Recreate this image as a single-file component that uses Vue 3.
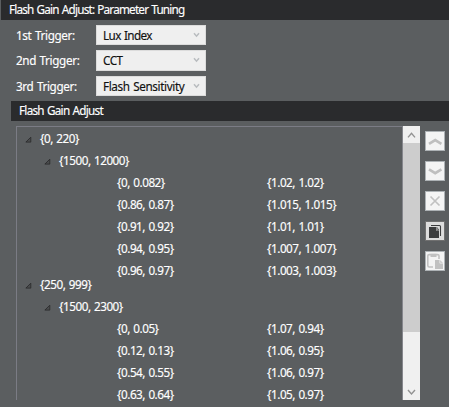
<script setup>
const triggers = [
  { label: '1st Trigger:', value: 'Lux Index', cls: 'lux' },
  { label: '2nd Trigger:', value: 'CCT', cls: 'cct' },
  { label: '3rd Trigger:', value: 'Flash Sensitivity', cls: 'sens' },
]
const groups = [
  {
    range: '{0, 220}',
    sub: '{1500, 12000}',
    rows: [
      ['{0, 0.082}', '{1.02, 1.02}'],
      ['{0.86, 0.87}', '{1.015, 1.015}'],
      ['{0.91, 0.92}', '{1.01, 1.01}'],
      ['{0.94, 0.95}', '{1.007, 1.007}'],
      ['{0.96, 0.97}', '{1.003, 1.003}'],
    ],
  },
  {
    range: '{250, 999}',
    sub: '{1500, 2300}',
    rows: [
      ['{0, 0.05}', '{1.07, 0.94}'],
      ['{0.12, 0.13}', '{1.06, 0.95}'],
      ['{0.54, 0.55}', '{1.06, 0.97}'],
      ['{0.63, 0.64}', '{1.05, 0.97}'],
    ],
  },
]
</script>

<template>
  <div class="panel">
    <header class="bar title">Flash Gain Adjust: Parameter Tuning</header>
    <div class="triggers">
      <div v-for="t in triggers" :key="t.label" class="trigger">
        <label>{{ t.label }}</label>
        <div class="combo">
          <span :class="t.cls">{{ t.value }}</span>
          <svg width="7" height="6" viewBox="0 0 7 6"><path d="M1 1.2 3.5 4.2 6 1.2" fill="none" stroke="#b9bcbf" stroke-width="1.5" /></svg>
        </div>
      </div>
    </div>
    <header class="bar subtitle">Flash Gain Adjust</header>
    <div class="body">
      <div class="tree">
        <div class="nodes">
          <div v-for="g in groups" :key="g.range" class="group">
            <div class="row top">
              <svg class="tri" width="7" height="7" viewBox="0 0 7 7"><path d="M.9 6.1H5.8V1.2Z" fill="#4a4c4e" stroke="#2c2d2e" stroke-width=".9" /></svg>
              <span>{{ g.range }}</span>
            </div>
            <div class="row sub">
              <svg class="tri" width="7" height="7" viewBox="0 0 7 7"><path d="M.9 6.1H5.8V1.2Z" fill="#4a4c4e" stroke="#2c2d2e" stroke-width=".9" /></svg>
              <span>{{ g.sub }}</span>
            </div>
            <div v-for="r in g.rows" :key="r[0]" class="row leaf">
              <span>{{ r[0] }}</span><span>{{ r[1] }}</span>
            </div>
          </div>
        </div>
        <div class="scroll">
          <div class="arrow"><svg width="9" height="8" viewBox="0 0 9 8"><path d="M1 6.4 4.5 2.4 8 6.4" fill="none" stroke="#929292" stroke-width="1.4" /></svg></div>
          <div class="thumb"></div>
          <div class="arrow end"><svg width="9" height="8" viewBox="0 0 9 8"><path d="M1 2 4.5 6 8 2" fill="none" stroke="#929292" stroke-width="1.4" /></svg></div>
        </div>
      </div>
      <div class="tools">
        <button><svg viewBox="0 0 18 18"><path d="M3 11.8 9.2 8l6.2 3.8" fill="none" stroke="#bfbfbf" stroke-width="2.7" /></svg></button>
        <button><svg viewBox="0 0 18 18"><path d="M3 7.4 9.2 11.2l6.2-3.8" fill="none" stroke="#bfbfbf" stroke-width="2.7" /></svg></button>
        <button><svg viewBox="0 0 18 18"><path d="M4.5 4.5l9 9M13.5 4.5l-9 9" fill="none" stroke="#c1c1c1" stroke-width="1.7" /></svg></button>
        <button class="active">
          <svg viewBox="0 0 18 18">
            <path d="M3 5h7v3.5h3V16H3z" fill="#3c3d3e" />
            <path d="M5 3.5h8.5q1 0 1 1V14" fill="none" stroke="#3c3d3e" stroke-width="1.1" />
            <path d="M10.8 5.3V7.9H12.8Z" fill="#eee" stroke="#3c3d3e" stroke-width=".7" />
          </svg>
        </button>
        <button>
          <svg viewBox="0 0 18 18">
            <path d="M7 15H3.3Q1.8 15 1.8 13.5V3.8Q1.8 2.6 3.3 2.6H11.5Q13 2.6 13 3.8V7" fill="none" stroke="#c1c1c1" stroke-width="1.6" />
            <path d="M4.5 1.8h6v3.2h-6z" fill="#c1c1c1" />
            <path d="M9 8h5l3 3v6H9z" fill="#c1c1c1" />
            <path d="M13.8 8v3.2H17" fill="none" stroke="#f4f4f4" stroke-width=".7" />
          </svg>
        </button>
      </div>
    </div>
  </div>
</template>

<style>
body { background: #5b5e60; overflow: hidden; }
</style>

<style scoped>
.panel {
  width: 449px;
  height: 407px;
  box-sizing: border-box;
  overflow: hidden;
  background: #5b5e60;
  color: #fff;
  font: 11.7px/20px "Noto Sans", "Open Sans", sans-serif;
  -webkit-text-stroke: 0.15px currentColor;
  word-spacing: 0.8px;
  white-space: nowrap;
}
.bar { height: 20px; background: #2a2b2d; line-height: 18px; }
.title { margin-left: 1px; padding-left: 8px; letter-spacing: -0.78px; }
.triggers {
  box-sizing: border-box;
  display: grid;
  gap: 5px;
  padding: 5px 0 0 16px;
  height: 81px;
  grid-template-rows: 20px 21px 20px;
}
.trigger { display: flex; }
.trigger label { width: 80px; letter-spacing: -0.35px; line-height: 20px; }
.combo {
  box-sizing: border-box;
  width: 110px;
  display: flex;
  justify-content: space-between;
  padding: 0 5px 0 6px;
  background: #efefef;
  border: 1px solid #dcdcdc;
  color: #111;
  line-height: 18px;
}
.combo svg { margin-top: 6px; }
.lux { letter-spacing: -0.6px; }
.cct { letter-spacing: -0.5px; }
.sens { letter-spacing: -0.36px; }
.subtitle { margin-left: 11px; padding-left: 8px; letter-spacing: -0.72px; }
.body { display: flex; padding: 5px 0 0 16px; }
.tree {
  box-sizing: border-box;
  display: flex;
  width: 404px;
  height: 274px;
  border-left: 1px solid #7b7c85;
}
.nodes {
  flex: 1;
  box-sizing: border-box;
  padding-top: 1px;
  border-top: 1px solid #7b7c85;
  border-right: 1px solid #85868c;
  letter-spacing: -0.46px;
}
.group + .group { margin-top: -8px; }
.row { height: 22px; display: flex; align-items: center; }
.row span { line-height: 14px; padding-bottom: 2px; }
.tri { margin-right: 8px; }
.top { padding-left: 8px; }
.sub { padding-left: 27px; }
.leaf { padding-left: 100px; }
.leaf span:first-child { width: 150px; }
.scroll { width: 17px; display: flex; flex-direction: column; background: #f0f0f0; }
.arrow { height: 17px; display: flex; align-items: center; justify-content: center; }
.end { margin-top: auto; }
.thumb { height: 189px; background: #cdcdcd; }
.tools { display: grid; grid-auto-rows: 20px; gap: 10px; padding: 5px 0 0 5px; align-content: start; }
button { box-sizing: border-box; width: 20px; height: 20px; padding: 0; background: #f4f4f4; border: 1px solid #adb2b5; display: block; }
button svg { display: block; width: 18px; height: 18px; }
.active { background: #dddddd; border-color: #707070; }
</style>
